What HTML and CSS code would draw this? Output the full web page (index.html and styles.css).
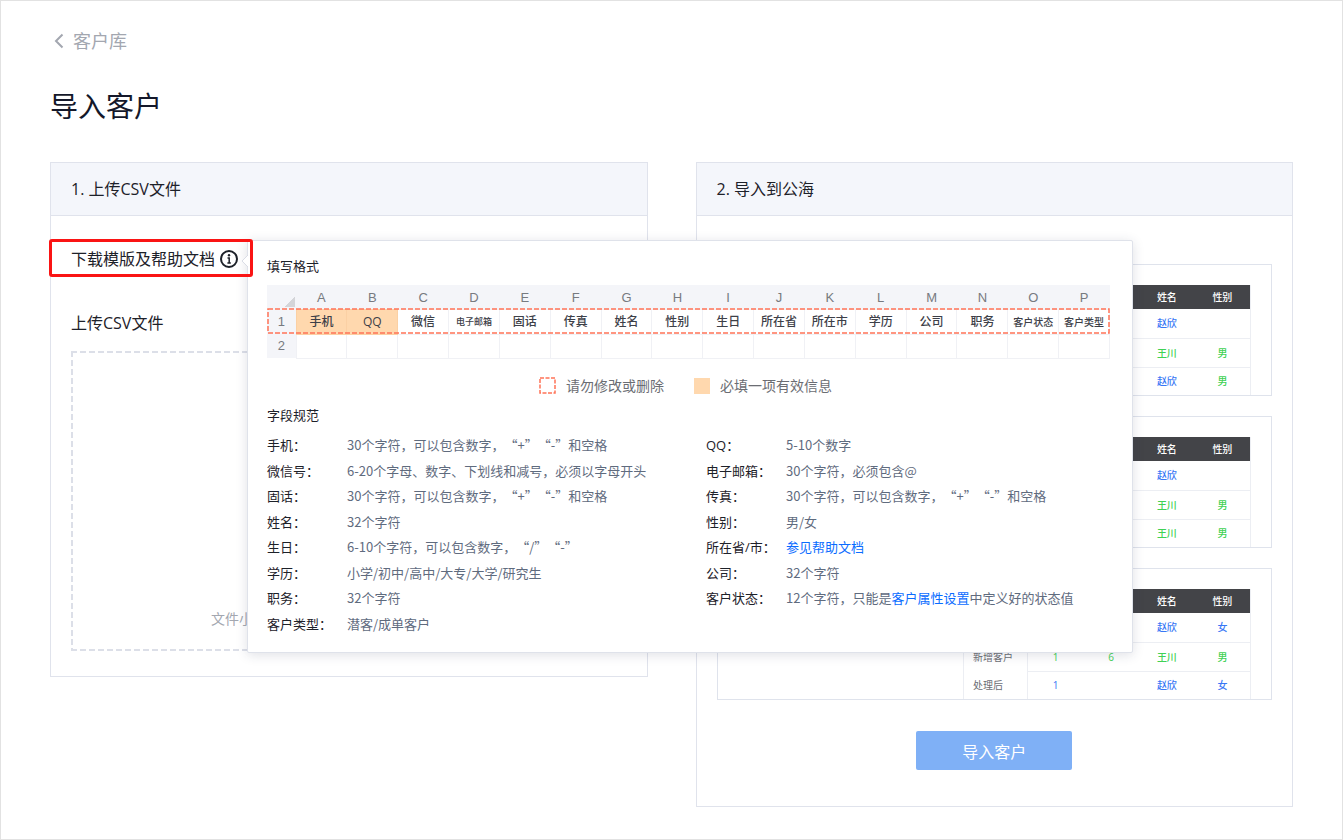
FILE: index.html
```html
<!DOCTYPE html>
<html lang="zh-CN">
<head>
    <meta charset="UTF-8">
    <meta name="viewport" content="width=device-width, initial-scale=1.0">
    <title>导入客户</title>
    <link rel="stylesheet" href="styles.css">
</head>
<body>
    <div class="page">
        <a class="back-link" href="#">
            <svg width="10" height="16" viewBox="0 0 10 16" fill="none" stroke="currentColor" stroke-width="2"><path d="M8.500 1.500 2 8l6.500 6.500"/></svg>
            <span>客户库</span>
        </a>
        <h1>导入客户</h1>

        <div class="steps">
            <!-- Step 1 -->
            <section class="card">
                <h2>1. 上传CSV文件</h2>
                <div class="card-body upload-body">
                    <div class="template">
                        <a class="template-link" href="#">下载模版及帮助文档</a>
                        <svg class="info-icon" width="20" height="20" viewBox="0 0 20 20"><circle cx="10" cy="10" r="8" fill="none" stroke="currentColor" stroke-width="2"/><circle cx="10" cy="6.200" r="1.200" fill="currentColor"/><path d="M8.500 9H10.200V14M8.400 14h3.400" fill="none" stroke="currentColor" stroke-width="1.500"/></svg>

                        <!-- Help popover -->
                        <div class="popover">
                            <svg class="popover-arrow" width="7" height="14" viewBox="0 0 7 14"><path d="M7 1 1 7l6 6" fill="#ffffff" stroke="#d9dce5"/></svg>
                            <h3>填写格式</h3>
                            <div class="sheet-wrap">
                                <table class="sheet">
                                    <thead>
                                        <tr><th class="corner"></th><th>A</th><th>B</th><th>C</th><th>D</th><th>E</th><th>F</th><th>G</th><th>H</th><th>I</th><th>J</th><th>K</th><th>L</th><th>M</th><th>N</th><th>O</th><th>P</th></tr>
                                    </thead>
                                    <tbody>
                                        <tr class="locked"><th>1</th><td class="required">手机</td><td class="required">QQ</td><td>微信</td><td class="tiny">电子邮箱</td><td>固话</td><td>传真</td><td>姓名</td><td>性别</td><td>生日</td><td>所在省</td><td>所在市</td><td>学历</td><td>公司</td><td>职务</td><td class="small">客户状态</td><td class="small">客户类型</td></tr>
                                        <tr><th>2</th><td></td><td></td><td></td><td></td><td></td><td></td><td></td><td></td><td></td><td></td><td></td><td></td><td></td><td></td><td></td><td></td></tr>
                                    </tbody>
                                </table>
                                <svg class="sheet-outline" width="100%" height="26"><rect x="1" y="1" width="100%" height="24"/></svg>
                            </div>
                            <div class="legend">
                                <svg width="17" height="17" viewBox="0 0 17 17"><rect x="1" y="1" width="15" height="15" fill="none" stroke="#ff7357" stroke-width="1.500" stroke-dasharray="4 1.500"/></svg>
                                <span>请勿修改或删除</span>
                                <i class="swatch"></i>
                                <span>必填一项有效信息</span>
                            </div>
                            <h3>字段规范</h3>
                            <div class="fields">
                                <dl>
                                    <div><dt>手机：</dt><dd>30个字符，可以包含数字，“+”“-”和空格</dd></div>
                                    <div><dt>微信号：</dt><dd>6-20个字母、数字、下划线和减号，必须以字母开头</dd></div>
                                    <div><dt>固话：</dt><dd>30个字符，可以包含数字，“+”“-”和空格</dd></div>
                                    <div><dt>姓名：</dt><dd>32个字符</dd></div>
                                    <div><dt>生日：</dt><dd>6-10个字符，可以包含数字，“/”“-”</dd></div>
                                    <div><dt>学历：</dt><dd>小学/初中/高中/大专/大学/研究生</dd></div>
                                    <div><dt>职务：</dt><dd>32个字符</dd></div>
                                    <div><dt>客户类型：</dt><dd>潜客/成单客户</dd></div>
                                </dl>
                                <dl>
                                    <div><dt>QQ：</dt><dd>5-10个数字</dd></div>
                                    <div><dt>电子邮箱：</dt><dd>30个字符，必须包含@</dd></div>
                                    <div><dt>传真：</dt><dd>30个字符，可以包含数字，“+”“-”和空格</dd></div>
                                    <div><dt>性别：</dt><dd>男/女</dd></div>
                                    <div><dt>所在省/市：</dt><dd><a href="#">参见帮助文档</a></dd></div>
                                    <div><dt>公司：</dt><dd>32个字符</dd></div>
                                    <div><dt>客户状态：</dt><dd>12个字符，只能是<a href="#">客户属性设置</a>中定义好的状态值</dd></div>
                                </dl>
                            </div>
                        </div>
                    </div>
                    <p class="upload-label">上传CSV文件</p>
                    <div class="dropzone">
                        <svg class="dropzone-outline" width="100%" height="100%"><path d="M0 1H2000"/><path d="M1 0V298"/><path d="M0 299H2000"/></svg>
                        <span>文件小于</span>
                    </div>
                </div>
            </section>

            <!-- Step 2 -->
            <section class="card">
                <h2>2. 导入到公海</h2>
                <div class="card-body import-body">
                    <div class="preview">
                        <table>
                            <thead><tr><th></th><th></th><th></th><th>姓名</th><th>性别</th></tr></thead>
                            <tbody>
                                <tr class="blue"><th></th><td></td><td></td><td>赵欣</td><td></td></tr>
                                <tr class="green"><th></th><td></td><td></td><td>王川</td><td>男</td></tr>
                                <tr class="blue"><th></th><td></td><td></td><td>赵欣</td><td class="green">男</td></tr>
                            </tbody>
                        </table>
                    </div>
                    <div class="preview">
                        <table>
                            <thead><tr><th></th><th></th><th></th><th>姓名</th><th>性别</th></tr></thead>
                            <tbody>
                                <tr class="blue"><th></th><td></td><td></td><td>赵欣</td><td></td></tr>
                                <tr class="green"><th></th><td></td><td></td><td>王川</td><td>男</td></tr>
                                <tr class="green"><th></th><td></td><td></td><td>王川</td><td>男</td></tr>
                            </tbody>
                        </table>
                    </div>
                    <div class="preview">
                        <table>
                            <thead><tr><th></th><th></th><th></th><th>姓名</th><th>性别</th></tr></thead>
                            <tbody>
                                <tr class="blue"><th></th><td></td><td></td><td>赵欣</td><td>女</td></tr>
                                <tr class="green"><th>新增客户</th><td>1</td><td>6</td><td>王川</td><td>男</td></tr>
                                <tr class="blue"><th>处理后</th><td>1</td><td></td><td>赵欣</td><td>女</td></tr>
                            </tbody>
                        </table>
                    </div>
                    <button type="button" class="import-button">导入客户</button>
                </div>
            </section>
        </div>
    </div>
</body>
</html>
```

FILE: styles.css
```css
* {
    box-sizing: border-box;
}

body {
    margin: 0;
    font-family: "Open Sans", "Noto Sans CJK SC", sans-serif;
    font-size: 16px;
    line-height: 24px;
    color: #1d2129;
    background-color: #ffffff;
}

h1, h2, h3, p, dl, dd {
    margin: 0;
    font-weight: normal;
}

a {
    color: #0a6cff;
    text-decoration: none;
}

table {
    border-collapse: collapse;
    table-layout: fixed;
}

th, td {
    padding: 0;
    font-weight: normal;
    text-align: center;
}

.page {
    min-height: 100vh;
    padding: 26px 49px 32px;
    border: 1px solid #e2e2e2;
}

.back-link {
    display: flex;
    align-items: center;
    gap: 9px;
    width: max-content;
    padding-left: 4px;
    font-size: 18px;
    line-height: 28px;
    color: #a3a7b0;
}

h1 {
    margin-top: 31px;
    font-size: 28px;
    line-height: 40px;
    color: #14182a;
}

.steps {
    display: flex;
    align-items: flex-start;
    gap: 48px;
    margin-top: 36px;
}

.card {
    flex: 1;
    min-width: 0;
    border: 1px solid #e0e3ec;
}

.card h2 {
    padding: 14px 20px;
    font-size: 16px;
    line-height: 24px;
    background-color: #f4f6fb;
    border-bottom: 1px solid #e0e3ec;
}

.upload-body {
    padding: 31px 20px 25px;
}

/* Template download row */
.template {
    position: relative;
    display: flex;
    align-items: center;
    gap: 4px;
    width: max-content;
}

.template::after {
    content: "";
    position: absolute;
    top: -8px;
    right: -14px;
    bottom: -6px;
    left: -22px;
    border: 3px solid #fa1414;
    border-radius: 3px;
    z-index: 3;
    pointer-events: none;
}

.template-link {
    color: inherit;
}

.popover {
    position: absolute;
    top: -7px;
    left: 176px;
    z-index: 2;
    width: 886px;
    padding: 15px 22px 15px 19px;
    border: 1px solid #dfe2ea;
    border-radius: 2px;
    background-color: #ffffff;
    box-shadow: 0 2px 12px rgba(40, 50, 80, 0.15);
    font-size: 13px;
    line-height: 20px;
}

.popover-arrow {
    position: absolute;
    top: 13px;
    left: -7px;
}

.popover h3 {
    font-size: 13px;
}

/* Spreadsheet sample */
.sheet-wrap {
    position: relative;
    margin: 9px 0 17px;
}

.sheet {
    width: 100%;
    font-size: 12px;
    line-height: 16px;
    color: #3d4048;
}

.sheet tr {
    height: 24px;
}

.sheet .locked {
    height: 25px;
}

.sheet th {
    font-family: "Liberation Sans", Arial, sans-serif;
    font-size: 13px;
    color: #777a80;
    background-color: #f4f5f9;
}

.sheet thead th {
    padding-top: 2px;
}

.sheet .corner {
    width: 29px;
    background: linear-gradient(135deg, transparent 50%, #d4d5d9 50%) 18px 12px / 10px 10px no-repeat #f4f5f9;
}

.sheet td {
    border: 1px solid #f0f1f5;
    font-weight: 500;
}

.sheet .required {
    background-color: #ffd8ae;
    border-color: #fbd0a4;
}

.sheet .small {
    font-size: 10px;
}

.sheet .tiny {
    font-size: 9px;
}

.sheet-outline {
    position: absolute;
    top: 23px;
    left: 0;
    padding-right: 2px;
    overflow: visible;
}

.sheet-outline rect {
    fill: none;
    stroke: #ff7357;
    stroke-width: 1.5;
    stroke-dasharray: 5 2;
}

.legend {
    display: flex;
    align-items: center;
    justify-content: center;
    gap: 10px;
    margin-bottom: 9px;
    padding-right: 6px;
    font-size: 14px;
    color: #6b6d73;
}

.swatch {
    width: 16px;
    height: 16px;
    margin-left: 20px;
    background-color: #ffd8ae;
}

/* Field rules */
.fields {
    display: grid;
    grid-template-columns: 439px 1fr;
    margin-top: 8px;
}

.fields dl {
    display: grid;
    grid-template-rows: repeat(8, 1fr);
    height: 204px;
}

.fields dl div {
    display: flex;
    align-items: center;
}

.fields dt {
    width: 80px;
    white-space: nowrap;
}

.fields dd {
    font-family: "Noto Sans CJK SC", sans-serif;
    text-spacing-trim: space-all;
    color: #5f6b7e;
    white-space: nowrap;
}

.upload-label {
    margin-top: 40px;
}

.dropzone {
    position: relative;
    height: 300px;
    margin-top: 16px;
    padding: 256px 0 0 140px;
    font-size: 14px;
    color: #a3a7b0;
}

.dropzone-outline {
    position: absolute;
    top: 0;
    left: 0;
    fill: none;
    stroke: #dcdfe8;
    stroke-width: 2;
    stroke-dasharray: 6 3;
}

/* Import preview */
.import-body {
    display: flex;
    flex-direction: column;
    gap: 20px;
    padding: 48px 20px 36px;
}

.preview {
    display: flex;
    justify-content: flex-end;
    padding: 20px 20px 0 0;
    border: 1px solid #dfe3ec;
}

.preview table {
    width: 288px;
    font-size: 10px;
    line-height: 16px;
    border-right: 1px solid #eceef3;
    border-left: 1px solid #eceef3;
}

.preview thead th {
    height: 24px;
    font-weight: 500;
    color: #ffffff;
    background-color: #434448;
}

.preview thead th:first-child {
    width: 64px;
}

.preview tbody tr {
    height: 29px;
}

.preview tbody tr:last-child {
    height: 28px;
}

.preview tbody th {
    padding-left: 9px;
    text-align: left;
    color: #6b6d73;
    border-right: 1px solid #eceef3;
}

.preview td {
    border-bottom: 1px solid #eceef3;
    font-weight: 500;
}

.preview tr:last-child td {
    border-bottom: none;
}

.blue {
    color: #3877f5;
}

.green {
    color: #3fd155;
}

.import-button {
    align-self: center;
    width: 156px;
    height: 39px;
    margin-top: 11px;
    padding: 0;
    border: none;
    border-radius: 2px;
    font-family: inherit;
    font-size: 16px;
    color: #ffffff;
    background-color: #7fb0f6;
    cursor: pointer;
}
```
